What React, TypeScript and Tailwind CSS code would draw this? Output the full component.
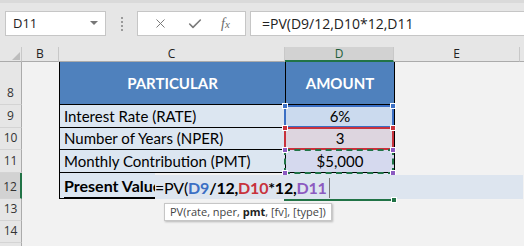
import { X, Check } from "lucide-react";

const cellFont = "font-['Lato',sans-serif]";
const uiFont = "font-['Open_Sans',sans-serif]";

function RowHead({ n, h, active }: { n?: number; h: string; active?: boolean }) {
  return (
    <div
      className={`w-[22px] ${h} shrink-0 flex items-end justify-center pb-[2px] border-b border-[#d4d4d4] border-r text-[12px] text-[#333] ${uiFont} ${
        active ? "bg-[#d2d2d2] border-r-2 border-r-[#217346]" : "bg-[#e6e6e6] border-r-[#ababab]"
      }`}
    >
      {n}
    </div>
  );
}

function Corner({ size }: { size: number }) {
  return (
    <svg width={size} height={size} viewBox="0 0 10 10">
      <polygon points="10,0 10,10 0,10" fill="#bdbdbd" />
    </svg>
  );
}

export default function App() {
  return (
    <div className="relative w-[524px] h-[246px] overflow-hidden bg-[#f2f2f2]">
      {/* toolbar */}
      <div className="h-[47px] bg-[#e6e6e6] border-t-[3px] border-[#dadada] flex items-start pt-[8px] pl-[5px]">
        <div className={`w-[101px] h-[25px] bg-white border border-[#c6c6c6] flex items-center justify-between pl-[7px] pr-[7px] text-[13px] text-[#222] ${uiFont}`}>
          <span>D11</span>
          <svg width="8" height="5" viewBox="0 0 8 5">
            <polygon points="0,0 8,0 4,4" fill="#777" />
          </svg>
        </div>
        <div className="w-[31px] h-[25px] flex flex-col items-center justify-center gap-[2px]">
          <span className="w-[2px] h-[2px] bg-[#9a9a9a]" />
          <span className="w-[2px] h-[2px] bg-[#9a9a9a]" />
          <span className="w-[2px] h-[2px] bg-[#9a9a9a]" />
          <span className="w-[2px] h-[2px] bg-[#9a9a9a]" />
        </div>
        <div className="w-[109px] h-[25px] bg-white border border-[#c6c6c6] flex items-center justify-around px-[6px] text-[#7a7a7a]">
          <X size={15} strokeWidth={1.6} />
          <Check size={16} strokeWidth={2.4} />
          <span className="font-['Liberation_Serif',serif] italic text-[14px] text-[#6a6a6a] leading-none">
            f<span className="text-[11px]">x</span>
          </span>
        </div>
        <div className={`ml-[4px] flex-1 h-[25px] bg-white border border-[#c6c6c6] border-r-0 flex items-center pl-[11px] text-[14px] text-[#222] ${uiFont}`}>
          =PV(D9/12,D10*12,D11
        </div>
      </div>

      {/* column headers */}
      <div className={`flex h-[15px] text-[12px] text-[#222] ${uiFont} leading-[14px]`}>
        <div className="w-[22px] bg-[#e6e6e6] border-r border-[#c8c8c8] border-b border-b-[#ababab] flex items-end justify-end p-[1px]">
          <Corner size={8} />
        </div>
        <div className="w-[37px] bg-[#e6e6e6] border-r border-[#c8c8c8] border-b border-b-[#ababab] text-center">B</div>
        <div className="w-[226px] bg-[#e6e6e6] border-r border-[#c8c8c8] border-b border-b-[#ababab] text-center">C</div>
        <div className="w-[109px] bg-[#d2d2d2] border-r border-[#c8c8c8] border-b-2 border-b-[#217346] text-center text-[#1e5e3a]">D</div>
        <div className="w-[126px] bg-[#e6e6e6] border-r border-[#c8c8c8] border-b border-b-[#ababab] text-center">E</div>
        <div className="flex-1 bg-[#e6e6e6] border-b border-b-[#ababab]" />
      </div>

      {/* rows */}
      <div className={`flex flex-col ${cellFont} text-[15px] text-black`}>
        <div className="flex h-[43px]">
          <RowHead n={8} h="h-[43px]" />
          <div className="w-[37px]" />
          <div className="w-[226px] bg-[#4f81bd] border-l border-b border-black flex items-center justify-center font-bold text-white text-[15px]">
            PARTICULAR
          </div>
          <div className="w-[110px] bg-[#4f81bd] border-x border-b border-black flex items-center justify-center font-bold text-white text-[15px]">
            AMOUNT
          </div>
        </div>
        <div className="flex h-[23px]">
          <RowHead n={9} h="h-[23px]" />
          <div className="w-[37px]" />
          <div className="w-[226px] bg-[#dce6f1] border-l border-b border-black flex items-end pl-[4px] leading-[22px]">
            Interest Rate (RATE)
          </div>
          <div className="w-[110px] bg-[#cbdaee] border-x border-b border-black flex items-end justify-center leading-[22px]">
            6%
          </div>
        </div>
        <div className="flex h-[22px]">
          <RowHead n={10} h="h-[22px]" />
          <div className="w-[37px]" />
          <div className="w-[226px] bg-[#dce6f1] border-l border-b border-black flex items-end pl-[4px] leading-[21px]">
            Number of Years (NPER)
          </div>
          <div className="w-[110px] bg-[#ddd5df] border-x border-b border-black flex items-end justify-center leading-[21px]">
            3
          </div>
        </div>
        <div className="flex h-[23px]">
          <RowHead n={11} h="h-[23px]" />
          <div className="w-[37px]" />
          <div className="w-[226px] bg-[#dce6f1] border-l border-b border-black flex items-end pl-[4px] leading-[22px] whitespace-nowrap">
            Monthly Contribution (PMT)
          </div>
          <div className="w-[110px] bg-[#d5d9ee] border-x border-b border-black flex items-end justify-center leading-[22px]">
            $5,000
          </div>
        </div>
        <div className="flex h-[26px]">
          <RowHead n={12} h="h-[26px]" active />
          <div className="w-[37px]" />
          <div className="w-[96px] bg-[#dce6f1] border-l border-b border-black flex items-end pl-[4px] leading-[24px] font-bold text-[16px] whitespace-nowrap overflow-hidden">
            <span className="border-b border-black leading-[22px]">Present Value</span>
          </div>
          <div className="w-[130px] border-b border-black" />
          <div className="w-[110px] bg-[#dce6f1] border-x border-b border-black" />
        </div>
        <div className="flex h-[22px]">
          <RowHead n={13} h="h-[22px]" />
        </div>
        <div className="flex h-[22px]">
          <RowHead n={14} h="h-[22px]" />
        </div>
        <div className="flex h-[22px]">
          <RowHead h="h-[22px]" />
        </div>
      </div>

      {/* range highlights over D9, D10, D11 */}
      <div className="absolute left-[284px] top-[105px] w-[110px] h-[23px] border-2 border-[#3b6fc4]">
        <span className="absolute -left-[4px] -top-[4px] w-[6px] h-[6px] bg-[#3b6fc4] border border-white" />
        <span className="absolute -right-[4px] -top-[4px] w-[6px] h-[6px] bg-[#3b6fc4] border border-white" />
      </div>
      <div className="absolute left-[284px] top-[127px] w-[110px] h-[23px] border-2 border-[#c8323c]">
        <span className="absolute -left-[4px] -top-[4px] w-[6px] h-[6px] bg-[#c8323c] border border-white" />
        <span className="absolute -right-[4px] -top-[4px] w-[6px] h-[6px] bg-[#c8323c] border border-white" />
      </div>
      <div className="absolute left-[284px] top-[149px] w-[110px] h-[25px] border-2 border-dashed border-[#217346]">
        <span className="absolute -left-[4px] -top-[4px] w-[6px] h-[6px] bg-[#8c5ac0] border border-white" />
        <span className="absolute -right-[4px] -top-[4px] w-[6px] h-[6px] bg-[#8c5ac0] border border-white" />
        <span className="absolute -left-[4px] -bottom-[4px] w-[6px] h-[6px] bg-[#8c5ac0] border border-white" />
        <span className="absolute -right-[4px] -bottom-[4px] w-[6px] h-[6px] bg-[#8c5ac0] border border-white" />
      </div>

      {/* in-cell editor for D12 */}
      <div className={`absolute left-[155px] top-[175px] w-[368px] h-[24px] bg-[#dde5ef] flex items-end leading-[22px] ${cellFont} text-[16px] text-black whitespace-nowrap tracking-[-0.2px]`}>
        <span>=PV(</span>
        <span className="font-bold text-[#3b6fc4]">D9</span>
        <span className="font-bold">/12,</span>
        <span className="font-bold text-[#c8323c]">D10</span>
        <span className="font-bold">*12,</span>
        <span className="font-bold text-[#8c5ac0]">D11</span>
        <span className="ml-[2px] mb-[1px] w-[1px] h-[20px] bg-[#777]" />
      </div>
      <div className="absolute left-[284px] top-[199px] w-[110px] h-[2px] bg-[#217346]">
        <span className="absolute -right-[3px] -top-[2px] w-[6px] h-[6px] bg-[#217346] border border-white" />
      </div>

      {/* function tooltip */}
      <div className={`absolute left-[164px] top-[203px] h-[18px] px-[5px] bg-white border border-[#c6c6c6] shadow-[1px_1px_2px_rgba(0,0,0,0.25)] flex items-center text-[11px] text-[#444] ${uiFont} whitespace-pre`}>
        PV(rate, nper, <span className="font-bold text-[#222]">pmt</span>, [fv], [type])
      </div>
    </div>
  );
}
